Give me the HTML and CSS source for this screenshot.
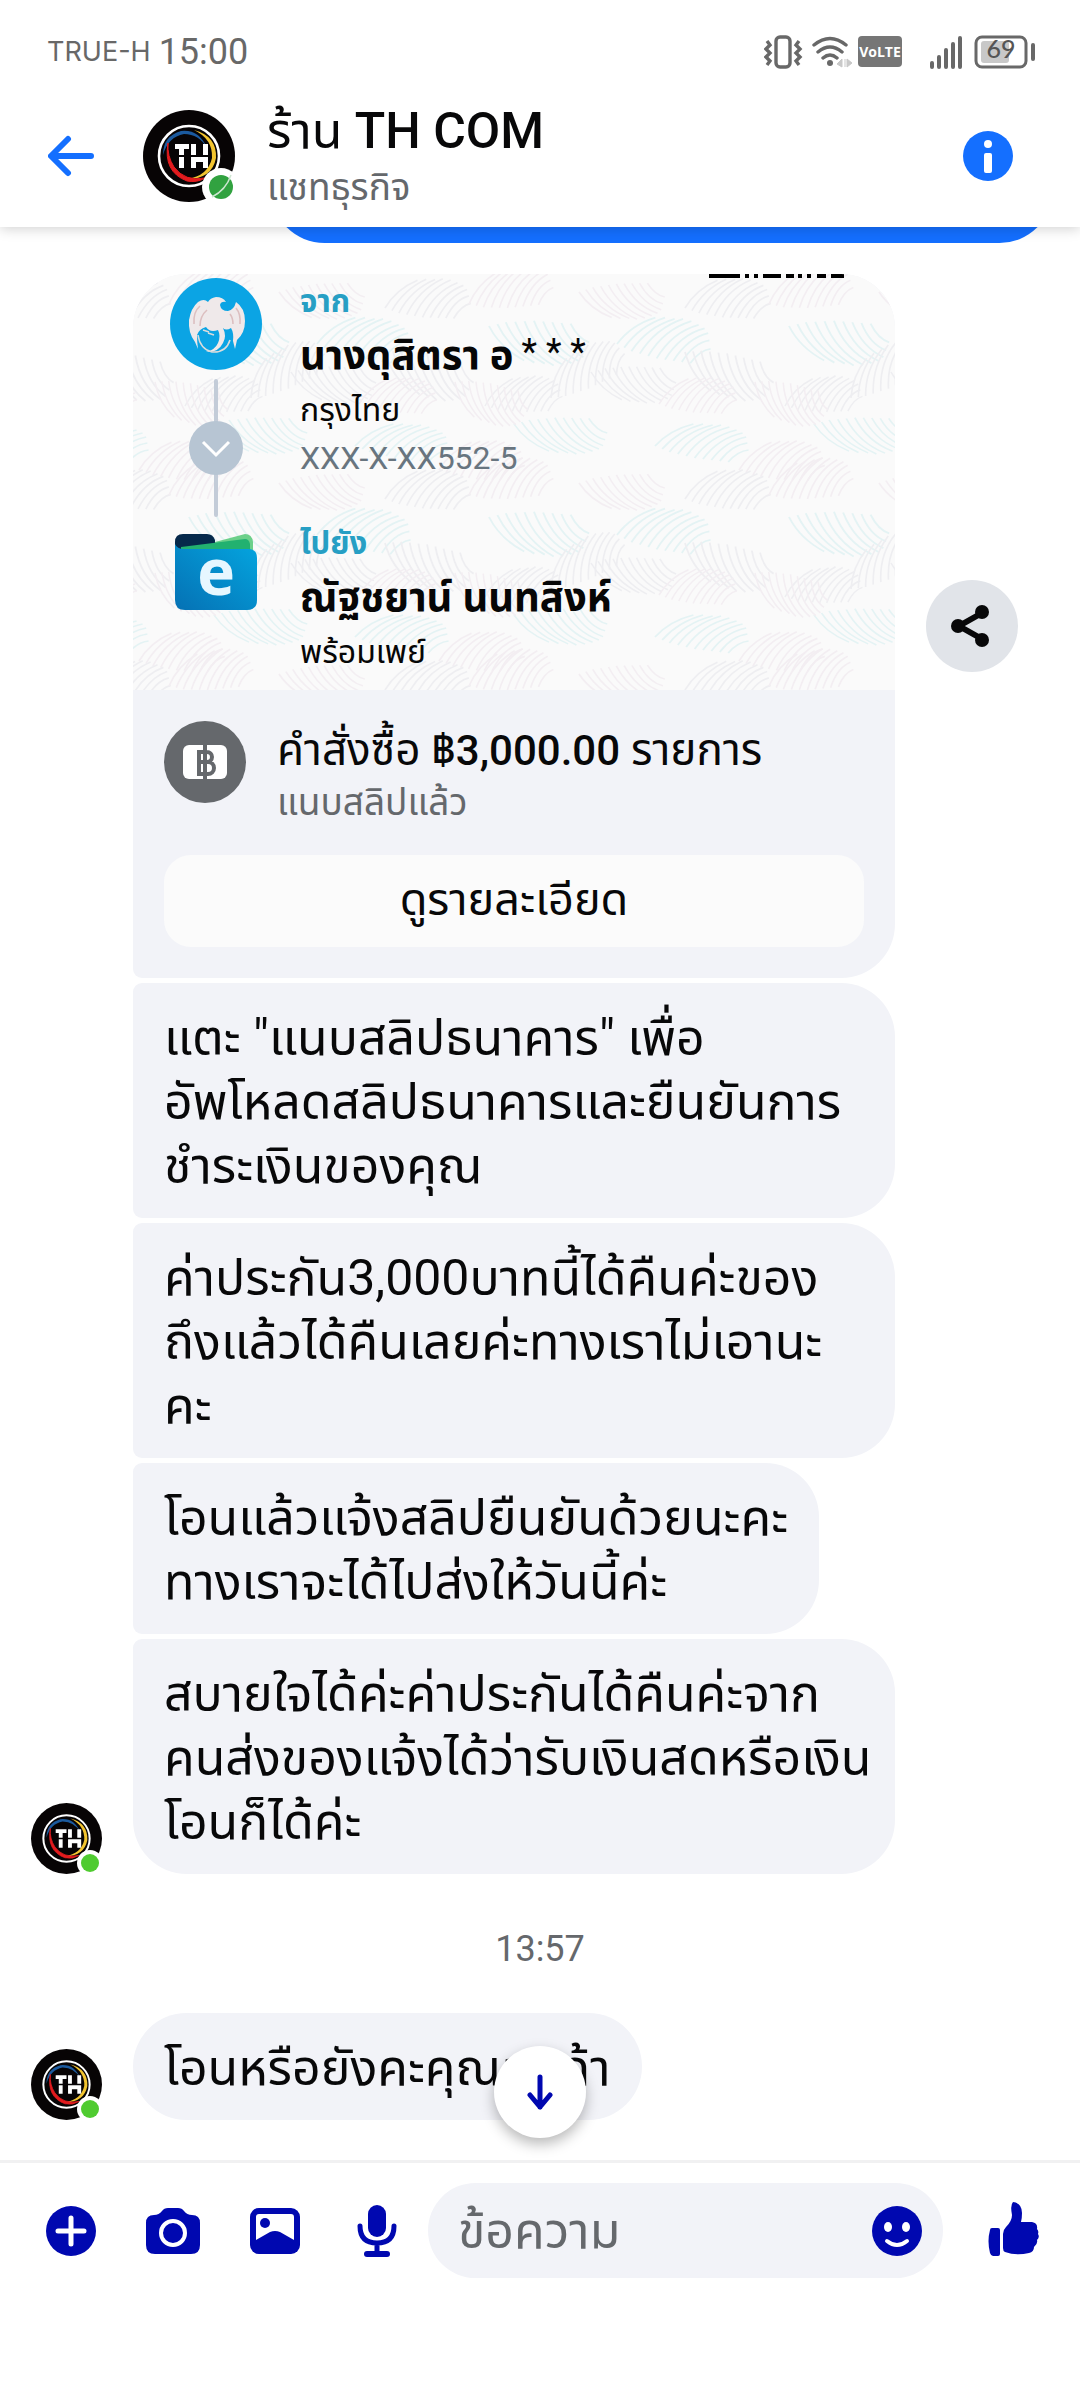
FILE: index.html
```html
<!DOCTYPE html>
<html lang="th">
<head>
<meta charset="utf-8">
<meta name="viewport" content="width=device-width, initial-scale=1">
<title>ร้าน TH COM</title>
<link rel="stylesheet" href="styles.css">
</head>
<body>
<svg class="defs" aria-hidden="true">
  <defs>
    <symbol id="logo" viewBox="0 0 92 92">
      <circle cx="46" cy="46" r="46" fill="#070405"/>
      <circle cx="46" cy="46" r="30" fill="none" stroke="#fff" stroke-width="2.6"/>
      <path d="M20 45Q20 26 38 21Q56 19 64 38Q56 24 41 24Q25 27 20 45Z" fill="#1b5a9e"/>
      <path d="M51 20Q74 26 73 48Q69 69 44 69Q65 66 69 48Q70 29 51 20Z" fill="#f2c42f"/>
      <path d="M25 33Q20 62 44 71Q54 73 62 68Q42 72 31 57Q24 46 25 33Z" fill="#e31b1e" stroke="#e31b1e"/>
      <path d="M32 34H46V39H41V45H36V39H32ZM48 34H53V45H48ZM60 34H65V45H60ZM36 47H41V58H36ZM48 47H65V58H60V52H53V58H48Z" fill="#fff"/>
    </symbol>
    <path id="feather" d="M0 0q12-16 32-22M6 3q13-18 34-25M12 6q13-20 36-27M19 8q13-21 36-29M26 10q13-22 36-29M33 12q13-22 35-28M40 13q13-21 33-26M47 14q12-19 29-23M54 15q10-16 23-18M61 16q8-11 17-12" fill="none" stroke-width="1.5"/>
    <g id="plumes">
      <g stroke="#e4f3f4">
        <use href="#feather" transform="translate(28 70) scale(1.2)"/>
        <use href="#feather" transform="translate(200 52) rotate(12) scale(1.3 -1.2)"/>
        <use href="#feather" transform="translate(66 172) scale(1.2 1)"/>
        <use href="#feather" transform="translate(225 150) rotate(8) scale(1.2 -1)"/>
      </g>
      <g stroke="#eeeef1">
        <use href="#feather" transform="translate(96 34) rotate(-6) scale(1.1)"/>
        <use href="#feather" transform="translate(96 78) rotate(22) scale(1.2 -1.2)"/>
        <use href="#feather" transform="translate(196 132) rotate(-10)"/>
        <use href="#feather" transform="translate(262 124) rotate(-34) scale(1.1)"/>
        <use href="#feather" transform="translate(2 98) rotate(10) scale(1.1 -1)"/>
      </g>
      <g stroke="#f3eef2">
        <use href="#feather" transform="translate(70 130) rotate(-6)"/>
        <use href="#feather" transform="translate(166 108) rotate(24) scale(1 -1.1)"/>
        <use href="#feather" transform="translate(180 30) rotate(-14) scale(1.1)"/>
        <use href="#feather" transform="translate(-10 18) rotate(6) scale(1.1 -1)"/>
        <use href="#feather" transform="translate(150 196) rotate(-6) scale(1.1)"/>
      </g>
    </g>
  </defs>
</svg>

<div class="app">
  <header class="top">
    <div class="status">
      <span class="carrier">TRUE-H</span>
      <span class="clock">15:00</span>
      <svg class="status-icons" viewBox="0 0 272 36" width="272" height="36" aria-hidden="true">
        <g fill="none" stroke="#686868" stroke-width="3.4">
          <rect x="12" y="3" width="14" height="30" rx="4"/>
          <path d="M3 7l3 4-4 4 4 4-4 4 4 4-3 4M35 7l-3 4 4 4-4 4 4 4-4 4 3 4"/>
          <path d="M50 11Q66-2 82 11M54 18Q66 8 78 18M59 24Q66 18 73 24" stroke-linecap="round"/>
        </g>
        <circle cx="66" cy="29" r="3" fill="#686868"/>
        <path d="M78 25v8l-5-3zM81 25v8M83 25v8l5-4z" fill="#c9c9c9" stroke="#c9c9c9"/>
        <rect x="94" y="2" width="44" height="31" rx="4" fill="#767676"/>
        <text x="116" y="23" text-anchor="middle" class="volte">VoLTE</text>
        <path d="M168 29v4M175 23v10M182 16v17M189 10v23M196 4v29" stroke="#686868" stroke-width="4" stroke-linecap="round"/>
        <rect x="217" y="7" width="28" height="22" rx="3" fill="#c8c8c8"/>
        <rect x="212" y="3" width="50" height="30" rx="6" fill="none" stroke="#686868" stroke-width="3"/>
        <path d="M269 11v14" stroke="#686868" stroke-width="4" stroke-linecap="round"/>
        <text x="237" y="24" text-anchor="middle" class="level">69</text>
      </svg>
    </div>
    <div class="bar">
      <button class="icon-btn back" aria-label="ย้อนกลับ">
        <svg viewBox="0 0 46 42" width="46" height="42"><path d="M43 21H4M20 4L3 21L20 38" fill="none" stroke="#146fff" stroke-width="6" stroke-linecap="round" stroke-linejoin="round"/></svg>
      </button>
      <span class="avatar">
        <svg width="92" height="92"><use href="#logo"/></svg>
        <svg class="presence" viewBox="0 0 38 38" width="38" height="38"><circle cx="19" cy="19" r="19" fill="#fff"/><circle cx="19" cy="19" r="12" fill="#31a240"/><path d="M10 29Q24 22 29 7" fill="none" stroke="#cfe6d2" stroke-width="1.5"/></svg>
      </span>
      <div class="who">
        <h1 class="name">ร้าน <b>TH COM</b></h1>
        <p class="kind">แชทธุรกิจ</p>
      </div>
      <button class="icon-btn" aria-label="ข้อมูล">
        <svg viewBox="0 0 50 50" width="50" height="50"><circle cx="25" cy="25" r="25" fill="#146fff"/><circle cx="25" cy="13" r="4" fill="#fff"/><rect x="21" y="22" width="8" height="20" rx="2" fill="#fff"/></svg>
      </button>
    </div>
  </header>

  <main class="thread">
    <div class="sent"></div>

    <div class="row">
      <article class="card">
        <div class="slip">
          <svg class="slip-bg" width="100%" height="100%" aria-hidden="true">
            <use href="#plumes" x="-144"/><use href="#plumes" x="156"/><use href="#plumes" x="456"/><use href="#plumes" x="756"/>
            <use href="#plumes" x="-144" y="191"/><use href="#plumes" x="156" y="191"/><use href="#plumes" x="456" y="191"/><use href="#plumes" x="756" y="191"/>
            <use href="#plumes" x="-144" y="382"/><use href="#plumes" x="156" y="382"/><use href="#plumes" x="456" y="382"/>
            <path d="M576 2h31M612 2h4M621 2h4M630 2h18M653 2h8M665 2h4M674 2h4M684 2h9M698 2h13" stroke="#000" stroke-width="4"/></svg>
          <div class="route">
            <svg viewBox="0 0 92 92" width="92" height="92"><circle cx="46" cy="46" r="46" fill="#0ba4e4"/>
              <path d="M38 24q2-4 8-5 7 0 10 5-5-1-6 3 1 6 8 6 6-1 8-9 9 6 9 19 0 12-8 19l-2 9-2-8q1-8-2-13-5 3-8 0 4 8 0 15-5 10-17 9 9-2 12-9 3-7 0-13-8 3-12-3-7 2-9 8 0 7 1 14l-3-7q-7-9-6-22 2-12 9-18 6-4 10 0z" fill="#efe9ea"/>
              <path d="M24 46q-1-12 6-18M30 48q0-10 7-16M70 46q1-10-4-16M63 46q0-6-3-10" fill="none" stroke="#dcbfc0" stroke-width="1.6"/>
              <path d="M28 57q2 14 14 17 14 1 18-12M33 52l6 2M38 55l6 2" fill="none" stroke="#d9dcdc" stroke-width="1.6"/></svg>
            <svg viewBox="0 0 54 138" width="54" height="138"><path d="M27 2V136" stroke="#c3ccd8" stroke-width="4" stroke-linecap="round"/><circle cx="27" cy="69" r="27" fill="#b7c5d3"/><path d="M14 63l13 13 13-13" fill="none" stroke="#fff" stroke-width="3"/></svg>
            <svg class="wallet" viewBox="0 0 82 76" width="82" height="76">
              <defs><linearGradient id="wl" x1="0" y1="1" x2="1" y2="0"><stop offset="0" stop-color="#0571b4"/><stop offset="1" stop-color="#04a5df"/></linearGradient></defs>
              <path d="M0 24V8Q0 0 8 0H32Q38 0 40 6V24Z" fill="#06294b"/>
              <path d="M40 8L70 0Q77 0 78 8V22H40Z" fill="#6cd08a"/>
              <path d="M6 13L70 5Q74 5 75 10V24H6Z" fill="#22b170"/>
              <path d="M0 10Q2 15 9 15H73Q82 15 82 24V66Q82 76 72 76H10Q0 76 0 66Z" fill="url(#wl)"/>
              <text x="41" y="61" text-anchor="middle" class="e">e</text></svg>
          </div>
          <div class="parties">
            <p class="tag">จาก</p>
            <p class="person">นางดุสิตรา อ<span class="mask">* * *</span></p>
            <p class="bank">กรุงไทย</p>
            <p class="acct">XXX-X-XX552-5</p>
            <p class="tag to">ไปยัง</p>
            <p class="person">ณัฐชยาน์ นนทสิงห์</p>
            <p class="bank">พร้อมเพย์</p>
          </div>
        </div>
        <div class="order">
          <svg viewBox="0 0 82 82" width="82" height="82" aria-hidden="true"><circle cx="41" cy="41" r="41" fill="#65686c"/><rect x="19" y="24" width="44" height="34" rx="6" fill="#fff"/><path d="M41 24v34M35 31h8a5 5 0 0 1 0 10h-8zM35 41h9a6 6 0 0 1 0 12h-9z" fill="none" stroke="#65686c" stroke-width="4"/></svg>
          <div class="order-text">
            <h2 class="order-title">คำสั่งซื้อ <b>฿3,000.00</b> รายการ</h2>
            <p class="order-sub">แนบสลิปแล้ว</p>
          </div>
        </div>
        <button class="details">ดูรายละเอียด</button>
      </article>
      <button class="share" aria-label="แชร์">
        <svg viewBox="0 0 38 42" width="38" height="42"><path d="M31 8L8 21L31 34" fill="none" stroke="#080809" stroke-width="6"/><g fill="#080809"><circle cx="31" cy="7" r="7"/><circle cx="7" cy="21" r="7"/><circle cx="31" cy="35" r="7"/></g></svg>
      </button>
    </div>

    <p class="bubble">แตะ "แนบสลิปธนาคาร" เพื่อ<br>อัพโหลดสลิปธนาคารและยืนยันการ<br>ชำระเงินของคุณ</p>
    <p class="bubble">ค่าประกัน3,000บาทนี้ได้คืนค่ะของ<br>ถึงแล้วได้คืนเลยค่ะทางเราไม่เอานะ<br>คะ</p>
    <p class="bubble fit">โอนแล้วแจ้งสลิปยืนยันด้วยนะคะ<br>ทางเราจะได้ไปส่งให้วันนี้ค่ะ</p>
    <div class="last">
      <span class="avatar">
        <svg width="71" height="71"><use href="#logo"/></svg>
        <svg class="presence" viewBox="0 0 26 26" width="26" height="26"><circle cx="13" cy="13" r="13" fill="#fff"/><circle cx="13" cy="13" r="9" fill="#4fcb30"/></svg>
      </span>
      <p class="bubble tail">สบายใจได้ค่ะค่าประกันได้คืนค่ะจาก<br>คนส่งของแจ้งได้ว่ารับเงินสดหรือเงิน<br>โอนก็ได้ค่ะ</p>
    </div>

    <time class="stamp">13:57</time>

    <div class="last">
      <span class="avatar">
        <svg width="71" height="71"><use href="#logo"/></svg>
        <svg class="presence" viewBox="0 0 26 26" width="26" height="26"><circle cx="13" cy="13" r="13" fill="#fff"/><circle cx="13" cy="13" r="9" fill="#4fcb30"/></svg>
      </span>
      <p class="bubble single">โอนหรือยังคะคุณลูกค้า</p>
    </div>

    <button class="jump" aria-label="เลื่อนลง">
      <svg viewBox="0 0 26 36" width="26" height="36"><path d="M13 3V33M3 21L13 33L23 21" fill="none" stroke="#0008b0" stroke-width="5" stroke-linecap="round" stroke-linejoin="round"/></svg>
    </button>
  </main>

  <footer class="composer">
    <div class="tools">
      <button class="icon-btn" aria-label="เพิ่มเติม"><svg viewBox="0 0 56 56" width="56" height="56"><circle cx="28" cy="28" r="25" fill="#0008b0"/><path d="M15 28H41M28 15V41" stroke="#fff" stroke-width="5" stroke-linecap="round"/></svg></button>
      <button class="icon-btn" aria-label="กล้อง"><svg viewBox="0 0 56 56" width="56" height="56"><path d="M9 12Q14 12 17 8Q19 5 23 5H33Q37 5 39 8Q42 12 47 12Q55 12 55 20V42Q55 51 46 51H10Q1 51 1 42V20Q1 12 9 12Z" fill="#0008b0"/><circle cx="28" cy="30" r="12" fill="none" stroke="#fff" stroke-width="4"/></svg></button>
      <button class="icon-btn" aria-label="รูปภาพ"><svg viewBox="0 0 56 56" width="56" height="56"><rect x="3" y="5" width="50" height="46" rx="9" fill="#0008b0"/><path d="M9 37V14Q9 11 12 11H44Q47 11 47 14V37L33 29Q28 27 23 29Z" fill="#fff"/><circle cx="18" cy="20" r="5" fill="#0008b0"/></svg></button>
      <button class="icon-btn" aria-label="ไมค์"><svg viewBox="0 0 56 56" width="56" height="56"><rect x="19" y="2" width="18" height="32" rx="9" fill="#0008b0"/><path d="M11 23Q11 40 28 40Q45 40 45 23M28 40V50" fill="none" stroke="#0008b0" stroke-width="5" stroke-linecap="round"/><rect x="15" y="48" width="26" height="6" rx="3" fill="#0008b0"/></svg></button>
    </div>
    <div class="field">
      <input class="input" type="text" placeholder="ข้อความ" aria-label="ข้อความ">
      <button class="icon-btn" aria-label="อีโมจิ"><svg viewBox="0 0 50 50" width="50" height="50"><circle cx="25" cy="25" r="25" fill="#0008b0"/><ellipse cx="16" cy="21" rx="4" ry="5" fill="#fff"/><ellipse cx="34" cy="21" rx="4" ry="5" fill="#fff"/><path d="M15 35Q25 43 35 35" fill="none" stroke="#fff" stroke-width="4" stroke-linecap="round"/></svg></button>
    </div>
    <button class="icon-btn" aria-label="ถูกใจ"><svg viewBox="0 0 52 54" width="52" height="54"><path d="M25 0Q34 1 34 11Q34 16 33 20H44Q50 21 49 27Q51 29 50 32Q52 35 49 38Q50 42 46 45Q46 50 41 51Q28 54 17 50Q15 49 15 46V32Q15 28 18 25Q24 19 24 13Q22 3 25 0Z" fill="#0008b0"/><path d="M4 26H10Q12 26 12 28V52Q12 54 10 54H5Q3 54 2 51Q-1 39 2 28Q2 26 4 26Z" fill="#0008b0"/></svg></button>
  </footer>
</div>
</body>
</html>
```
FILE: styles.css
```css
* { box-sizing: border-box; }

body {
  margin: 0;
  background: #fff;
  color: #080809;
  font-family: Roboto, "Noto Sans Thai", "Noto Sans", sans-serif;
}

h1, h2, p { margin: 0; font-weight: 400; }

button {
  border: 0;
  padding: 0;
  background: none;
  color: inherit;
  font: inherit;
}

svg { display: block; flex: none; }

.defs { position: absolute; width: 0; height: 0; }

.app {
  display: flex;
  flex-direction: column;
  min-height: 100vh;
}

/* Header */
.top {
  position: relative;
  z-index: 1;
  height: 227px;
  background: #fff;
  box-shadow: 0 2px 12px rgba(0, 0, 0, .18);
}

.status {
  display: flex;
  align-items: center;
  gap: 8px;
  height: 82px;
  padding: 22px 44px 0 47px;
  color: #686868;
  line-height: 36px;
}

.carrier { font-family: Inter, sans-serif; font-size: 27px; }
.clock { font-size: 36px; }
.status-icons { margin-left: auto; }
.volte { font: 700 14px "Open Sans", sans-serif; fill: #fff; }
.level { font: 500 25px Lato, sans-serif; fill: #555; }

.bar {
  display: flex;
  align-items: center;
  height: 145px;
  padding: 2px 67px 0 48px;
}

.icon-btn { display: block; flex: none; }

.avatar { position: relative; display: block; flex: none; }
.bar .avatar { margin: 0 32px 0 49px; }
.presence { position: absolute; right: -5px; bottom: -4px; }
.last .presence { right: -1px; bottom: -2px; }

.who { flex: 1; min-width: 0; }
.name { font-size: 50px; line-height: 64px; }
.name b { font-weight: 500; }
.kind { font-size: 37px; line-height: 50px; color: #65686c; }

/* Message thread */
.thread {
  position: relative;
  flex: 1;
  display: flex;
  flex-direction: column;
  gap: 5px;
  padding-bottom: 40px;
  overflow: hidden;
}

.sent {
  height: 107px;
  margin: -91px 27px 26px 271px;
  border-radius: 54px;
  background: #146fff;
}

.row {
  display: flex;
  align-items: center;
  gap: 31px;
  padding-left: 133px;
}

.card {
  width: 762px;
  padding-bottom: 31px;
  border-radius: 54px 54px 54px 9px;
  background: #f2f3f8;
  overflow: hidden;
}

.slip {
  position: relative;
  display: flex;
  gap: 38px;
  height: 416px;
  padding: 4px 37px 0;
  background: #fafafa;
  color: #060606;
}

.slip-bg { position: absolute; inset: 0; }

.route {
  position: relative;
  display: flex;
  flex-direction: column;
  align-items: center;
  gap: 9px;
}

.wallet { margin-top: 8px; overflow: visible; }
.e { font: 700 64px "Noto Sans", sans-serif; fill: #e6f7ff; }

.parties { position: relative; white-space: nowrap; }
.tag { font-size: 31px; font-weight: 700; line-height: 48px; color: #279fc4; }
.person { font-size: 40px; font-weight: 700; line-height: 60px; }
.mask { margin-left: 8px; font-weight: 400; font-size: 36px; line-height: 1; vertical-align: 5px; }
.bank { font-size: 32px; line-height: 48px; }
.acct { font-size: 32px; line-height: 48px; color: #68757f; }
.to { margin-top: 38px; }

.order {
  display: flex;
  gap: 31px;
  padding: 31px 31px 0;
}

.order-title { font-size: 44px; line-height: 58px; }
.order-title b { font-size: 42px; font-weight: 500; line-height: 1; }
.order-sub { font-size: 37px; line-height: 48px; color: #65686c; }

.details {
  display: block;
  width: 700px;
  height: 92px;
  margin: 28px auto 0;
  border-radius: 27px;
  background: #fbfbfb;
  font-size: 45px;
}

.share, .jump {
  display: grid;
  place-items: center;
  width: 92px;
  height: 92px;
  border-radius: 50%;
}

.share { background: #e1e4e9; }
.share svg { margin-right: 4px; }

.bubble {
  width: 762px;
  margin-left: 133px;
  padding: 23px 31px 20px;
  border-radius: 9px 54px 54px 9px;
  background: #f2f3f8;
  font-size: 50px;
  line-height: 64px;
  white-space: nowrap;
}

.fit { width: fit-content; }

.last { display: flex; align-items: flex-end; padding-left: 31px; }
.last .bubble { margin-left: 31px; }
.tail { border-radius: 9px 54px 54px 54px; }
.single { width: fit-content; border-radius: 54px; }

.stamp {
  padding: 50px 0 39px;
  color: #65686c;
  font-size: 36px;
  line-height: 40px;
  text-align: center;
}

.jump {
  position: absolute;
  bottom: 22px;
  left: 50%;
  margin-left: -46px;
  background: #fff;
  box-shadow: 0 6px 14px rgba(0, 0, 0, .28);
}

/* Composer */
.composer {
  display: flex;
  align-items: center;
  gap: 28px;
  padding: 20px 40px 122px 43px;
  border-top: 3px solid #f1f1f2;
}

.tools { display: flex; gap: 46px; }
.composer > .icon-btn { margin: 0 0 4px 17px; }

.field {
  flex: 1;
  display: flex;
  align-items: center;
  min-width: 0;
  height: 95px;
  margin-left: -5px;
  padding: 0 21px 0 30px;
  border-radius: 48px;
  background: #f2f3f8;
}

.input {
  flex: 1;
  min-width: 0;
  height: 95px;
  padding: 0;
  border: 0;
  background: none;
  color: #080809;
  font: inherit;
  font-size: 50px;
}

.input::placeholder { color: #65686c; opacity: 1; }
```
